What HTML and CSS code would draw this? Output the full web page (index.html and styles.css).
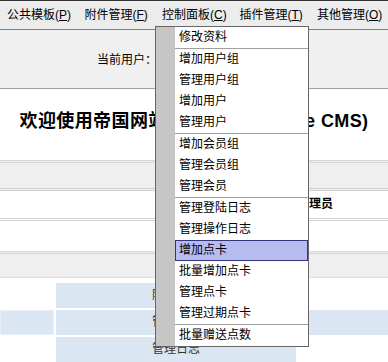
FILE: index.html
```html
<!DOCTYPE html>
<html lang="zh">
<head>
    <meta charset="UTF-8">
    <title>帝国网站管理系统</title>
    <link rel="stylesheet" href="styles.css">
</head>
<body>
    <div class="menubar">
        <span class="menu">公共模板(<u>P</u>)</span>
        <span class="menu">附件管理(<u>F</u>)</span>
        <span class="menu">控制面板(<u>C</u>)</span>
        <span class="menu">插件管理(<u>T</u>)</span>
        <span class="menu">其他管理(<u>O</u>)</span>
    </div>

    <div class="header">
        <span class="user">当前用户：</span>
    </div>

    <div class="welcome">
        <h1>欢迎使用帝国网站管理系统 (Empire CMS)</h1>
    </div>

    <div class="band"></div>
    <div class="info-row">
        <span class="info-label"></span>
        <b class="info-value">管理员</b>
    </div>
    <div class="blank-row"></div>
    <div class="band band-low"></div>

    <div class="quick">
        <div class="cell"></div>
        <div class="cell blue">附件管理</div>
        <div class="cell"></div>

        <div class="cell blue edged"></div>
        <div class="cell blue">管理信息</div>
        <div class="cell blue"></div>

        <div class="cell"></div>
        <div class="cell blue">管理日志</div>
        <div class="cell"></div>
    </div>

    <ul class="dropdown">
        <li>修改资料</li>
        <li class="sep">增加用户组</li>
        <li>管理用户组</li>
        <li>增加用户</li>
        <li>管理用户</li>
        <li class="sep">增加会员组</li>
        <li>管理会员组</li>
        <li>管理会员</li>
        <li class="sep">管理登陆日志</li>
        <li>管理操作日志</li>
        <li class="active">增加点卡</li>
        <li>批量增加点卡</li>
        <li>管理点卡</li>
        <li>管理过期点卡</li>
        <li class="sep">批量赠送点数</li>
    </ul>
</body>
</html>
```

FILE: styles.css
```css
body {
    margin: 0;
    font-family: "Liberation Sans", "Noto Sans CJK SC", sans-serif;
    font-size: 12px;
    color: #000;
    background-color: #fff;
}
.menubar {
    display: flex;
    height: 27px;
    padding: 1px 0 0 7px;
    line-height: 27px;
    background-color: #ececec;
    border-top: 1px solid #333;
    border-bottom: 1px solid #808080;
}
.menubar .menu {
    flex: 0 0 77.5px;
    white-space: nowrap;
}
.header {
    height: 59px;
    padding-left: 97px;
    background-color: #f0f0f0;
    border-bottom: 1px solid #a0a0a0;
    box-sizing: border-box;
}
.header .user {
    display: block;
    padding-top: 22px;
    line-height: 16px;
}
.welcome {
    height: 71px;
    padding-top: 20px;
    box-sizing: border-box;
}
.welcome h1 {
    margin: 0;
    font-size: 18px;
    line-height: 24px;
    letter-spacing: 0.4px;
    text-align: center;
}
.band {
    height: 31px;
    background-color: #efefef;
    border-top: 3px double #d6d6d6;
    border-bottom: 3px double #d0d0d0;
    box-sizing: border-box;
}
.band-low {
    height: 27px;
    border-bottom: 1px solid #dcdcdc;
}
.info-row {
    display: grid;
    grid-template-columns: 297px 1fr;
    height: 27px;
    line-height: 27px;
    border-bottom: 3px double #d6d6d6;
}
.blank-row {
    height: 30px;
}
.quick {
    display: grid;
    grid-template-columns: 54px 240px 1fr;
    grid-auto-rows: 25px;
    gap: 2px;
    margin-top: 5px;
}
.quick .cell {
    line-height: 25px;
    text-align: center;
    color: #333;
}
.quick .blue {
    background-color: #dae6f2;
}
.quick .edged {
    box-shadow: inset 0 0 0 1px #e6eef7;
}
.dropdown {
    position: absolute;
    left: 155px;
    top: 26px;
    width: 152px;
    margin: 0;
    padding: 0;
    list-style: none;
    border: 1px solid #666;
    background: linear-gradient(to right, #c6c6c6 19px, #fff 19px);
}
.dropdown li {
    height: 21px;
    margin-left: 19px;
    padding-left: 4px;
    line-height: 21px;
    box-sizing: border-box;
}
.dropdown li.sep {
    height: 22px;
    border-top: 1px solid #a0a0a0;
}
.dropdown li.active {
    padding-left: 3px;
    line-height: 19px;
    background-color: #b6bcf0;
    border: 1px solid #34347c;
}
```
